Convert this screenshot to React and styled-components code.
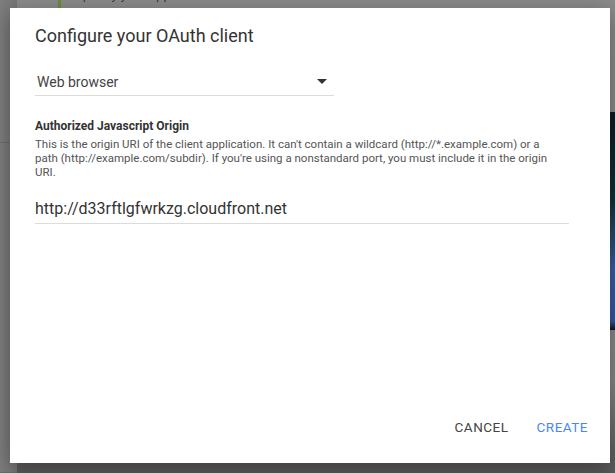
import React from "react";
import styled, { createGlobalStyle } from "styled-components";

const Global = createGlobalStyle`
  html, body {
    margin: 0;
    padding: 0;
    width: 615px;
    height: 473px;
    overflow: hidden;
    font-family: Roboto, "Liberation Sans", sans-serif;
  }
`;

const Page = styled.div`
  position: relative;
  width: 615px;
  height: 473px;
  background: linear-gradient(to bottom, #8a8a8a 0%, #868686 80%, #5f5f5f 97%, #5a5a5a 100%);
  overflow: hidden;
`;

// what shows behind the overlay
const Behind = styled.div`
  display: flex;
  height: 100%;
`;

const SideStrip = styled.div`
  width: 17px;
  display: flex;
  flex-direction: column;
`;

const StripPart = styled.div`
  height: ${(p) => p.h}px;
  flex: ${(p) => (p.h ? "none" : 1)};
  background: linear-gradient(to right, #7e7e7e, #767676);
  border-bottom: 1px solid #6c6c6c;
`;

const BehindMain = styled.div`
  flex: 1;
  display: flex;
  flex-direction: column;
  padding-left: 41px;
`;

const Hint = styled.div`
  border-left: 3px solid #6f8a3a;
  padding-left: 14px;
  height: 8px;
  font-size: 13px;
  line-height: 14px;
  color: #3a3a3a;
  overflow: hidden;
  display: flex;
  align-items: flex-end;
`;

const HintText = styled.span`
  transform: translateY(-6px);
`;

const RightImage = styled.div`
  position: absolute;
  right: 0;
  top: 112px;
  width: 6px;
  height: 218px;
  background: linear-gradient(to bottom, #101a22 0%, #123038 40%, #3a5d9a 72%, #34569a 96%, #111 100%);
`;

const Overlay = styled.div`
  position: absolute;
  inset: 0;
  display: flex;
  justify-content: center;
  padding-top: 8px;
`;

const Dialog = styled.div`
  width: 600px;
  height: 455px;
  margin-left: 5px;
  background: #fff;
  box-shadow: 0 6px 20px rgba(0, 0, 0, 0.35);
  display: flex;
  flex-direction: column;
  box-sizing: border-box;
  padding: 16px 25px 0 25px;
`;

const Title = styled.h2`
  margin: 0;
  font-size: 18px;
  font-weight: 400;
  color: #333;
  line-height: 24px;
`;

const SelectBox = styled.div`
  margin-top: 20px;
  width: 299px;
  height: 28px;
  border-bottom: 1px solid #dcdcdc;
  display: flex;
  align-items: center;
  justify-content: space-between;
  padding: 0 7px 0 2px;
  box-sizing: border-box;
  font-size: 14px;
  color: #444;
`;

const Caret = styled.span`
  width: 0;
  height: 0;
  border-left: 5px solid transparent;
  border-right: 5px solid transparent;
  border-top: 5px solid #333;
`;

const Label = styled.div`
  margin-top: 22px;
  font-size: 12px;
  font-weight: 700;
  color: #333;
  line-height: 16px;
`;

const Help = styled.p`
  margin: 3px 0 0 0;
  width: 518px;
  font-size: 11.5px;
  line-height: 14px;
  color: #555;
`;

const Field = styled.div`
  margin-top: 14px;
  width: 534px;
  height: 30px;
  border-bottom: 1px solid #dcdcdc;
  font-size: 16px;
  color: #333;
  display: flex;
  align-items: center;
`;

const Actions = styled.div`
  margin-top: auto;
  display: flex;
  justify-content: flex-end;
  gap: 28px;
  padding: 0 0 28px 0;
  margin-right: -3px;
`;

const Button = styled.button`
  border: 0;
  background: none;
  padding: 0;
  font-family: inherit;
  font-size: 13.5px;
  letter-spacing: 0.5px;
  color: ${(p) => (p.$primary ? "#4a88f0" : "#444")};
`;

export default function App() {
  return (
    <Page>
      <Global />
      <Behind>
        <SideStrip>
          <StripPart h={142} />
          <StripPart />
        </SideStrip>
        <BehindMain>
          <Hint>
            <HintText>Specify your app's client ID</HintText>
          </Hint>
        </BehindMain>
      </Behind>
      <RightImage />
      <Overlay>
        <Dialog>
          <Title>Configure your OAuth client</Title>
          <SelectBox>
            <span>Web browser</span>
            <Caret />
          </SelectBox>
          <Label>Authorized Javascript Origin</Label>
          <Help>
            This is the origin URI of the client application. It can't contain a
            wildcard (http://*.example.com) or a path (http://example.com/subdir).
            If you're using a nonstandard port, you must include it in the origin
            URI.
          </Help>
          <Field>http://d33rftlgfwrkzg.cloudfront.net</Field>
          <Actions>
            <Button>CANCEL</Button>
            <Button $primary>CREATE</Button>
          </Actions>
        </Dialog>
      </Overlay>
    </Page>
  );
}
